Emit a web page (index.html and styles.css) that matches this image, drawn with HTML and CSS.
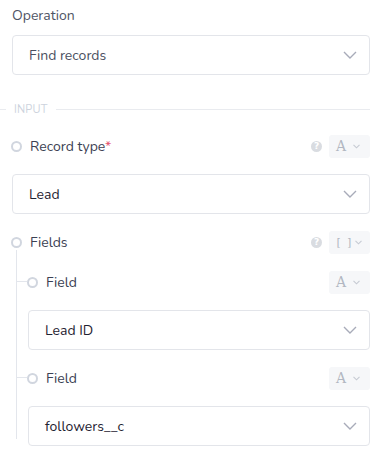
FILE: index.html
```html
<!DOCTYPE html>
<html>
<head>
<meta charset="utf-8">
<link rel="stylesheet" href="styles.css">
</head>
<body>
<div class="panel">
  <div class="label">Operation</div>
  <div class="select muted">
    <span>Find records</span>
    <svg class="chev" width="14" height="8" viewBox="0 0 14 8"><path d="M1 1l6 6 6-6" fill="none" stroke="#a8abb9" stroke-width="1.4"/></svg>
  </div>

  <div class="divider"><span class="dl short"></span><span class="dtext">INPUT</span><span class="dl long"></span></div>

  <div class="row">
    <span class="dot"></span>
    <span class="name">Record type<span class="req">*</span></span>
    <span class="help">?</span>
    <span class="type"><span class="tA">A</span><svg width="7" height="5" viewBox="0 0 7 5"><path d="M0.5 0.8l3 3 3-3" fill="none" stroke="#c6cad3" stroke-width="1.1"/></svg></span>
  </div>
  <div class="select">
    <span>Lead</span>
    <svg class="chev" width="14" height="8" viewBox="0 0 14 8"><path d="M1 1l6 6 6-6" fill="none" stroke="#a8abb9" stroke-width="1.4"/></svg>
  </div>

  <div class="row">
    <span class="dot"></span>
    <span class="name">Fields</span>
    <span class="help">?</span>
    <span class="type"><span class="tB">[ ]</span><svg width="7" height="5" viewBox="0 0 7 5"><path d="M0.5 0.8l3 3 3-3" fill="none" stroke="#c6cad3" stroke-width="1.1"/></svg></span>
  </div>

  <div class="tree">
    <div class="row child">
      <span class="dot"></span>
      <span class="name">Field</span>
      <span class="type"><span class="tA">A</span><svg width="7" height="5" viewBox="0 0 7 5"><path d="M0.5 0.8l3 3 3-3" fill="none" stroke="#c6cad3" stroke-width="1.1"/></svg></span>
    </div>
    <div class="select">
      <span>Lead ID</span>
      <svg class="chev" width="14" height="8" viewBox="0 0 14 8"><path d="M1 1l6 6 6-6" fill="none" stroke="#a8abb9" stroke-width="1.4"/></svg>
    </div>
    <div class="row child">
      <span class="dot"></span>
      <span class="name">Field</span>
      <span class="type"><span class="tA">A</span><svg width="7" height="5" viewBox="0 0 7 5"><path d="M0.5 0.8l3 3 3-3" fill="none" stroke="#c6cad3" stroke-width="1.1"/></svg></span>
    </div>
    <div class="select">
      <span>followers__c</span>
      <svg class="chev" width="14" height="8" viewBox="0 0 14 8"><path d="M1 1l6 6 6-6" fill="none" stroke="#a8abb9" stroke-width="1.4"/></svg>
    </div>
  </div>
</div>
</body>
</html>
```
FILE: styles.css
```css
* { box-sizing: border-box; }
html, body { margin: 0; padding: 0; background: #ffffff; }
body {
  font-family: "Nunito", "Lato", "Open Sans", sans-serif;
  font-size: 14px;
  color: #2a2f3d;
}
.panel {
  padding: 6px 13px 0 12px;
  display: flex;
  flex-direction: column;
}
.label {
  line-height: 20px;
  color: #4f5565;
  margin-bottom: 9px;
}
.select {
  height: 40px;
  border: 1px solid #e3e5ea;
  border-radius: 4px;
  display: flex;
  align-items: center;
  justify-content: space-between;
  padding: 0 12px 0 16px;
  color: #1f2332;
  margin-bottom: 16px;
}
.select.muted { color: #4a4f60; margin-bottom: 0; }
.chev { display: block; }
.divider {
  margin: 27px 0 18px -12px;
  height: 14px;
  display: flex;
  align-items: center;
}
.dl { height: 1px; background: #e9ebef; }
.dl.short { width: 6px; }
.dl.long { flex: 1; }
.dtext {
  font-size: 11px;
  color: #cdd3dd;
  margin: 0 8px;
  letter-spacing: 0.2px;
}
.row {
  height: 24px;
  display: flex;
  align-items: center;
  margin-bottom: 16px;
  position: relative;
}
.dot {
  width: 11px;
  height: 11px;
  border: 2px solid #d1d6df;
  border-radius: 50%;
  margin-left: -1px;
  margin-right: 8px;
  flex: none;
}
.name { color: #3b4152; flex: 1; }
.req { color: #e4566f; }
.help {
  width: 11px;
  height: 11px;
  border-radius: 50%;
  background: #d9dce1;
  color: #ffffff;
  font-size: 9px;
  font-weight: 700;
  line-height: 11px;
  text-align: center;
  margin-right: 7px;
  font-family: "DejaVu Sans", sans-serif;
}
.type {
  width: 41px;
  height: 23px;
  background: #f6f7f9;
  border-radius: 3px;
  display: flex;
  align-items: center;
  padding-left: 7px;
  gap: 6px;
}
.type svg { display: block; }
.tA {
  font-family: "DejaVu Serif", "Liberation Serif", serif;
  font-weight: 300;
  font-size: 14px;
  color: #b2b7c2;
  width: 11px;
  line-height: 16px;
}
.tB {
  font-family: "DejaVu Sans Mono", monospace;
  font-size: 11px;
  color: #b2b7c2;
  width: 14px;
  margin-left: -1px;
  white-space: pre;
  letter-spacing: -1px;
}
.tree {
  position: relative;
  padding-left: 16px;
  display: flex;
  flex-direction: column;
  margin-top: -16px;
  padding-top: 16px;
}
.tree::before {
  content: "";
  position: absolute;
  left: 4px;
  top: -4px;
  bottom: 23px;
  width: 1px;
  background: #e3e6ec;
}
.child::before {
  content: "";
  position: absolute;
  left: -12px;
  top: 11px;
  width: 11px;
  height: 1px;
  background: #e3e6ec;
}
```
